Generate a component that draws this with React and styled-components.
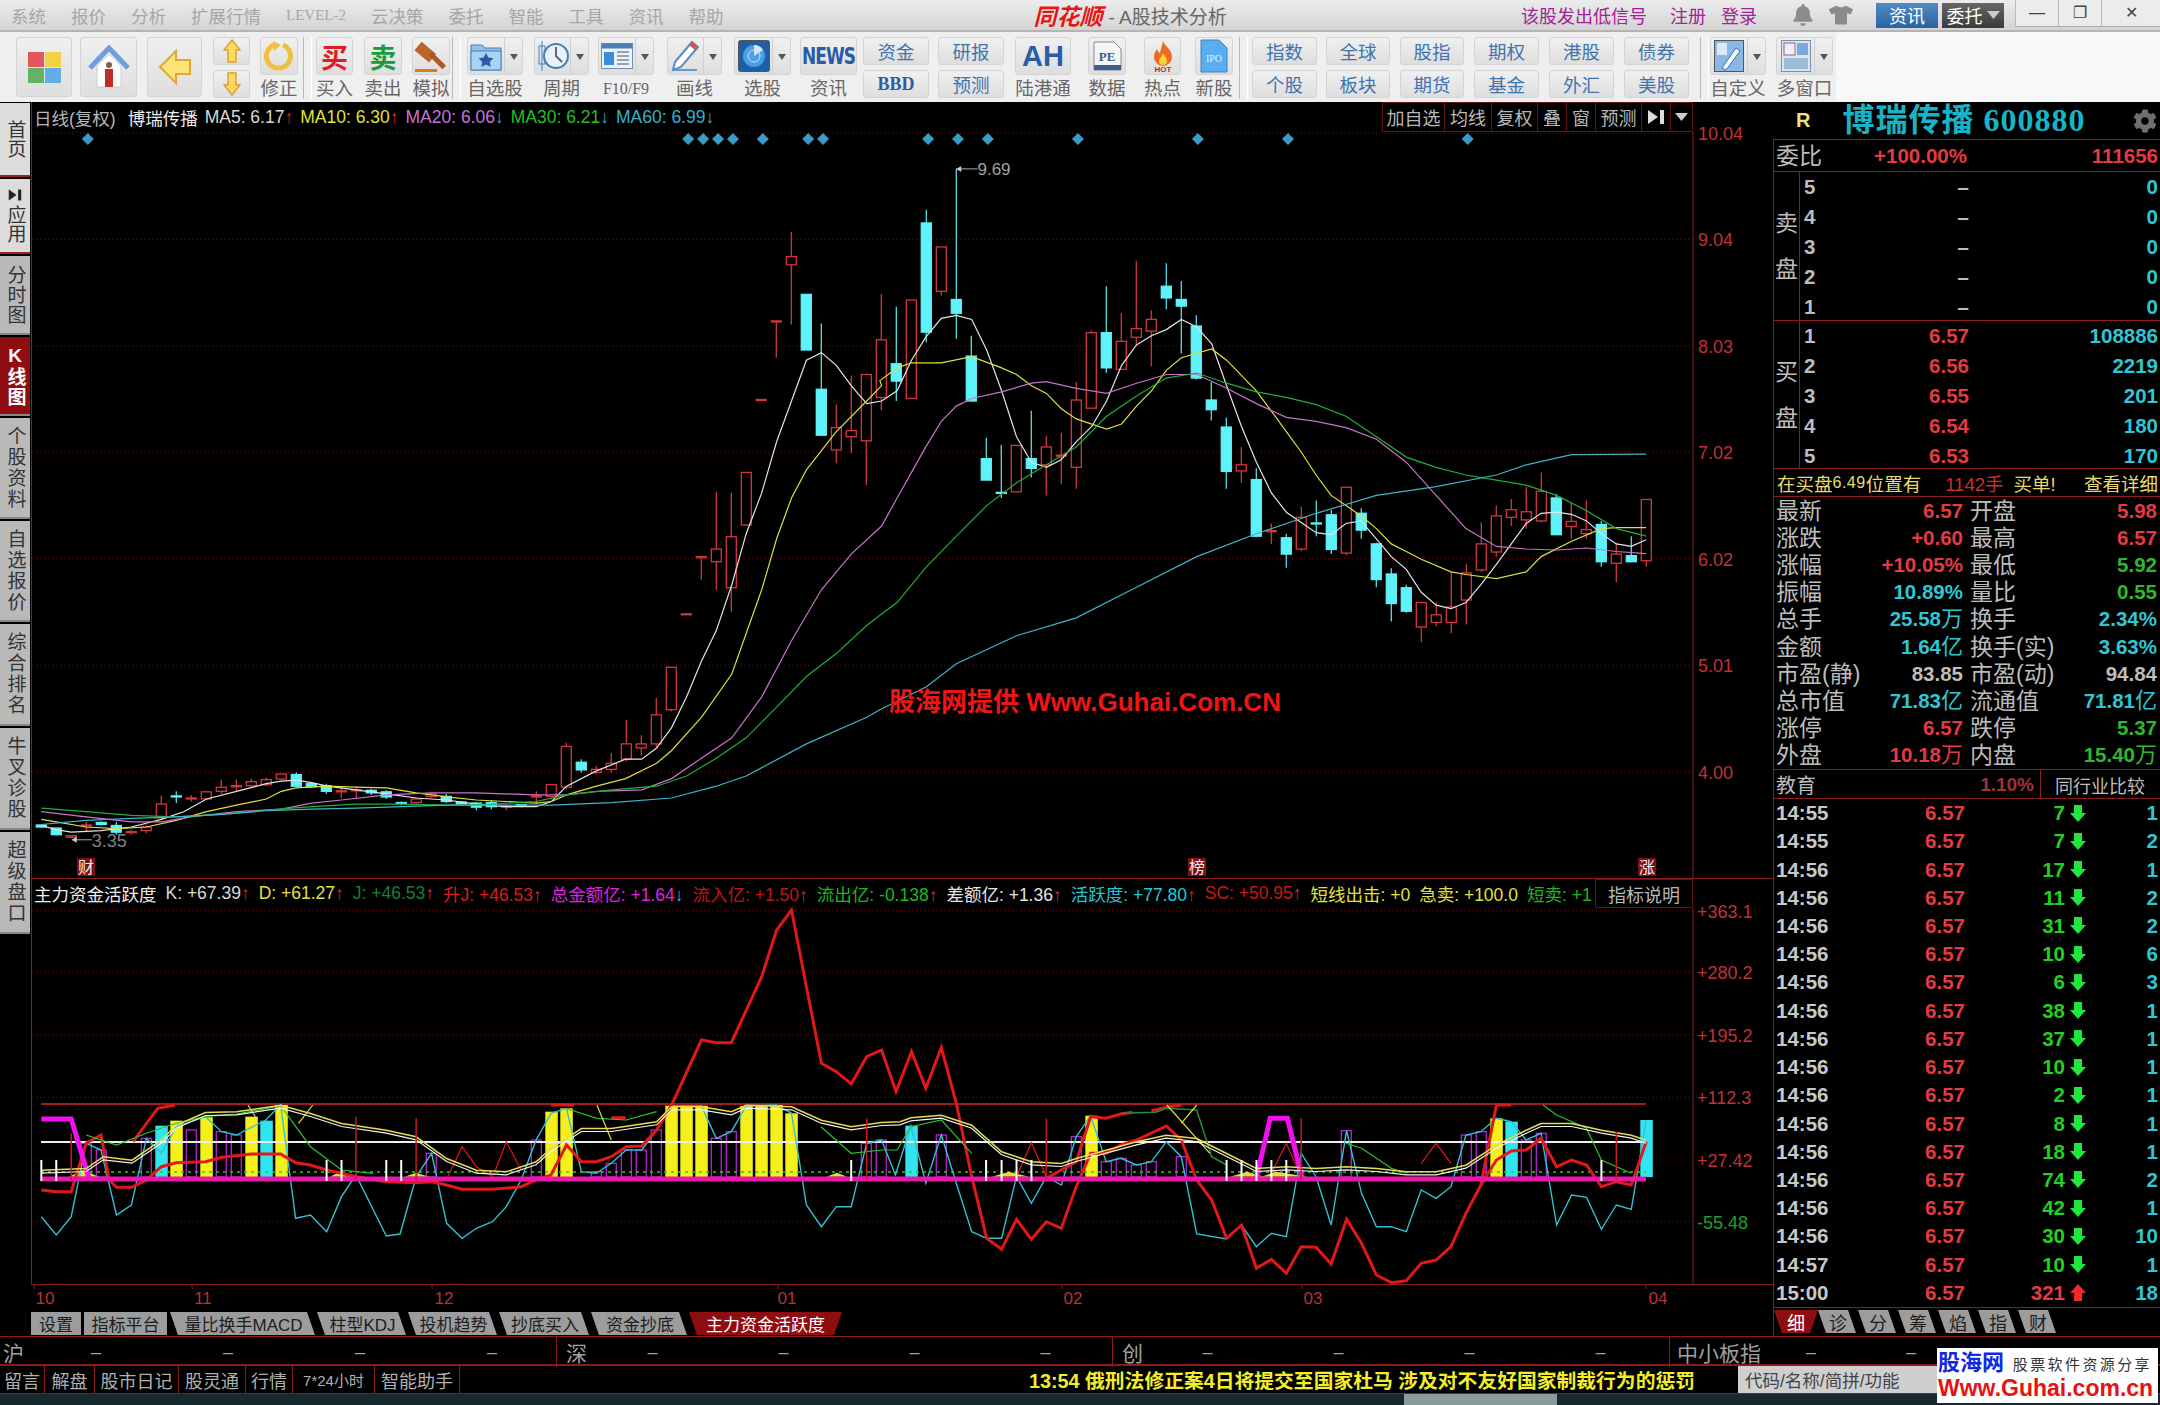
import React from "react";
import styled, { createGlobalStyle } from "styled-components";
import { FaBell, FaCog, FaTshirt } from "react-icons/fa";

const LINE = "#8c1c1c";
const RED = "#e23b44";
const CYAN = "#2fc6d6";
const GREEN = "#2fb82f";
const GREY = "#bdbdbd";
const CJK = `"Liberation Sans", "Noto Sans CJK SC", sans-serif`;

const Global = createGlobalStyle`
  html, body { margin: 0; padding: 0; background: #000; }
  * { box-sizing: border-box; }
`;

const Page = styled.div`
  width: 2160px;
  height: 1405px;
  position: relative;
  overflow: hidden;
  display: flex;
  flex-direction: column;
  background: #000;
  font-family: ${CJK};
`;

/* title bar */
const TitleBar = styled.div`
  height: 32px;
  flex: none;
  display: flex;
  align-items: center;
  padding-left: 11px;
  background: linear-gradient(#ececec, #d4d4d4);
  border-bottom: 2px solid #b4b4b4;
`;
const Menu = styled.div`
  display: flex;
  gap: 25px;
  color: #a6a6a6;
  font-size: 17.5px;
`;
const MenuSerif = styled.span`
  font-family: "Liberation Serif", serif;
  font-size: 15px;
  line-height: 24px;
`;
const Brand = styled.div`
  margin-left: 310px;
  display: flex;
  align-items: center;
  gap: 6px;
  color: #666;
  font-size: 19px;
`;
const BrandMark = styled.span`
  color: #e01818;
  font-weight: 700;
  font-style: italic;
  font-size: 23px;
  text-shadow: 0 0 1px #fff;
`;
const TitleRight = styled.div`
  margin-left: auto;
  display: flex;
  align-items: center;
  height: 100%;
`;
const Alert = styled.span`
  color: #a5219a;
  font-size: 18px;
  margin-left: ${(p) => p.$ml}px;
`;
const Shade = styled.span`
  display: flex;
  color: #8b8b8b;
  margin-left: ${(p) => p.$ml}px;
`;
const SkinButton = styled.span`
  width: 62px;
  height: 25px;
  margin-left: ${(p) => p.$ml}px;
  display: flex;
  align-items: center;
  justify-content: center;
  gap: 4px;
  color: #fff;
  font-size: 18px;
  background: ${(p) => (p.$blue ? "linear-gradient(#4f8cc4, #2a62a0)" : "linear-gradient(#666, #3a3a3a)")};
`;
const WinButton = styled.span`
  width: ${(p) => p.$w}px;
  height: 27px;
  margin-top: -4px;
  margin-left: ${(p) => p.$ml || 0}px;
  display: flex;
  align-items: center;
  justify-content: center;
  color: #444;
  background: #ececec;
  border-left: 1px solid #bbb;
  border-bottom: 1px solid #aaa;
`;

/* toolbar */
const Toolbar = styled.div`
  height: 70px;
  flex: none;
  background: #f8f8f8;
`;
const ToolRow = styled.div`
  width: 1836px;
  height: 100%;
  padding: 5px 0 0 16px;
  display: flex;
  align-items: flex-start;
  background: #efefef;
`;
const Tool = styled.div`
  width: ${(p) => p.$w}px;
  margin-left: ${(p) => p.$ml || 0}px;
  flex: none;
  display: flex;
  flex-direction: column;
  align-items: center;
`;
const ToolBox = styled.div`
  width: 100%;
  height: ${(p) => p.$h || 38}px;
  margin-bottom: ${(p) => p.$mb || 0}px;
  display: flex;
  align-items: center;
  justify-content: center;
  border: 1px solid #d4d4d4;
  border-radius: 3px;
  background: linear-gradient(#f0f0f0, #dedede);
  color: #3f74ae;
  font-size: 18.5px;
  white-space: nowrap;
`;
const SplitIcon = styled.span`
  flex: 1;
  height: 100%;
  display: flex;
  align-items: center;
  justify-content: center;
`;
const Caret = styled.span`
  width: 18px;
  height: 100%;
  display: flex;
  align-items: center;
  justify-content: center;
  border-left: 1px solid #d0d0d0;
  &::after {
    content: "";
    border: 4px solid transparent;
    border-top: 6px solid #555;
    margin-top: 5px;
  }
`;
const ToolLabel = styled.span`
  color: #666;
  font-size: 18.5px;
  line-height: 24px;
  margin-top: 2px;
  white-space: nowrap;
`;
const ToolLabelSerif = styled(ToolLabel)`
  font-family: "Liberation Serif", serif;
  font-size: 16px;
`;
const Grip = styled.div`
  width: 9px;
  height: 62px;
  margin-left: ${(p) => p.$ml}px;
  flex: none;
  border-left: 1px solid #b8b8b8;
  border-right: 1px solid #fff;
`;
const ToolGlyph = styled.span`
  color: ${(p) => p.$c};
  font-weight: 700;
  font-size: 27px;
`;
const NewsGlyph = styled.span`
  color: #2a5ca8;
  font-family: "DejaVu Sans", sans-serif;
  font-weight: 700;
  font-size: 17px;
  letter-spacing: -1px;
  transform: scaleY(1.35);
`;
const AhGlyph = styled.span`
  color: #2a5ca8;
  font-weight: 700;
  font-size: 29px;
`;
const BbdGlyph = styled.span`
  color: #2a5ca8;
  font-weight: 700;
  font-family: "Liberation Serif", serif;
  font-size: 18px;
`;

/* main body */
const Body = styled.div`
  height: 1234px;
  flex: none;
  display: flex;
`;
const Sidebar = styled.div`
  width: 31px;
  flex: none;
  padding-top: 1px;
  display: flex;
  flex-direction: column;
  gap: 2px;
`;
const SideTab = styled.div`
  height: ${(p) => p.$h}px;
  width: 30px;
  display: flex;
  flex-direction: column;
  align-items: center;
  justify-content: center;
  gap: 3px;
  color: ${(p) => (p.$on ? "#fff" : "#333")};
  background: ${(p) => (p.$on ? "#8f0c10" : p.$top ? "#dcdcdc" : "#b9b9b9")};
  border-bottom: 2px solid ${(p) => (p.$top ? "#9c2020" : "#888")};
  font-size: 19px;
`;
const SideText = styled.span`
  writing-mode: vertical-rl;
  text-orientation: upright;
  letter-spacing: ${(p) => p.$ls}px;
  font-weight: ${(p) => (p.$on ? 700 : 400)};
`;
const ChartColumn = styled.div`
  width: 1742px;
  flex: none;
  display: flex;
  flex-direction: column;
`;
const Pane = styled.div`
  position: relative;
  height: ${(p) => p.$h}px;
  flex: none;
  display: flex;
  flex-direction: column;
  border-bottom: 1px solid ${LINE};
  box-shadow: inset 1px 0 0 ${LINE};
`;
const Legend = styled.div`
  height: ${(p) => p.$h}px;
  flex: none;
  display: flex;
  align-items: center;
  padding-left: 3px;
  gap: ${(p) => p.$gap}px;
  overflow: hidden;
  white-space: nowrap;
  font-size: 17.5px;
  margin-right: 80px;
`;
const LegendItem = styled.span`
  color: ${(p) => p.$c};
  flex: none;
  margin-left: ${(p) => p.$ml || 0}px;
`;
const Arrow = styled.span`
  color: ${(p) => (p.$up ? "#e02020" : "#39b4d0")};
`;
const Buttons = styled.div`
  position: absolute;
  right: 80px;
  top: 0;
  height: ${(p) => p.$h}px;
  display: flex;
  background: #000;
`;
const BarButton = styled.span`
  width: ${(p) => p.$w}px;
  display: flex;
  align-items: center;
  justify-content: center;
  color: #b8b8b8;
  font-size: 18px;
  border: 1px solid #641414;
  border-left-width: ${(p) => (p.$first ? 1 : 0)}px;
`;
const Plot = styled.svg`
  display: block;
  flex: none;
  width: 1742px;
  overflow: visible;
`;
const Watermark = styled.div`
  position: absolute;
  left: 858px;
  top: 579px;
  color: #f01414;
  font-size: 26px;
  font-weight: 700;
  white-space: nowrap;
`;
const TabRow = styled.div`
  height: 26px;
  flex: none;
  display: flex;
  align-items: flex-start;
  padding-top: 2px;
`;
const IndicatorTab = styled.span`
  width: ${(p) => p.$w}px;
  height: 23px;
  flex: none;
  display: flex;
  align-items: center;
  justify-content: center;
  margin-right: ${(p) => p.$mr || 0}px;
  font-size: 17px;
  white-space: nowrap;
  color: ${(p) => (p.$on ? "#fff" : "#1c1c1c")};
  background: ${(p) => (p.$on ? "#8f0c10" : "#9c9c9c")};
  clip-path: ${(p) =>
    p.$on
      ? "polygon(0 0, 100% 0, calc(100% - 8px) 100%, 8px 100%)"
      : p.$flat
      ? "none"
      : "polygon(0 0, calc(100% - 10px) 0, calc(100% - 2px) 100%, 8px 100%)"};
`;

/* quote panel */
const Panel = styled.div`
  width: 387px;
  flex: none;
  display: flex;
  flex-direction: column;
`;
const PanelHead = styled.div`
  height: 37px;
  flex: none;
  display: flex;
  align-items: center;
  padding-left: 23px;
`;
const RMark = styled.span`
  color: #eee27a;
  font-size: 20px;
  font-weight: 700;
`;
const StockName = styled.span`
  margin-left: 32px;
  color: #18b4c6;
  font-family: "Liberation Serif", "Noto Sans CJK SC", serif;
  font-size: 32px;
  font-weight: 700;
  line-height: 37px;
  letter-spacing: 1px;
  white-space: nowrap;
`;
const GearWrap = styled.span`
  margin-left: auto;
  margin-right: 3px;
  display: flex;
  color: #6f6f6f;
`;
const PanelBody = styled.div`
  flex: 1;
  min-height: 0;
  display: flex;
  flex-direction: column;
  border-left: 1px solid ${LINE};
`;
const RatioRow = styled.div`
  height: 33px;
  flex: none;
  display: grid;
  grid-template-columns: 191px 1fr;
  align-items: center;
  padding: 0 2px;
  border-top: 1px solid ${LINE};
  border-bottom: 1px solid ${LINE};
`;
const CellSplit = styled.div`
  display: flex;
  justify-content: space-between;
  align-items: center;
`;
const Cjk = styled.span`
  color: ${GREY};
  font-size: 23px;
  line-height: 26px;
  white-space: nowrap;
`;
const Num = styled.span`
  color: ${(p) => p.$c || GREY};
  font-size: 20.5px;
  line-height: 26px;
  font-weight: 700;
  text-align: right;
  white-space: nowrap;
`;
const NumUnit = styled.span`
  font-size: 22px;
  font-weight: 400;
`;
const Book = styled.div`
  height: ${(p) => p.$h}px;
  flex: none;
  display: flex;
  border-bottom: 1px solid ${LINE};
`;
const BookSide = styled.div`
  width: 26px;
  flex: none;
  display: flex;
  flex-direction: column;
  align-items: center;
  justify-content: center;
  gap: 14px;
  line-height: 32px;
  border-right: 1px solid ${LINE};
  color: ${GREY};
  font-size: 23px;
`;
const BookRows = styled.div`
  flex: 1;
  display: grid;
  grid-auto-rows: 30px;
`;
const BookRow = styled.div`
  display: grid;
  grid-template-columns: 165px 1fr;
  align-items: center;
  padding: 0 2px 0 4px;
`;
const NoticeRow = styled.div`
  height: 28px;
  flex: none;
  display: flex;
  align-items: center;
  padding: 0 2px 0 3px;
  border-bottom: 1px solid ${LINE};
  color: #e6dc72;
  font-size: 18.5px;
  white-space: nowrap;
`;
const NoticeNum = styled.span`
  font-size: 16px;
  letter-spacing: 0.5px;
`;
const NoticeRed = styled.span`
  color: #c83030;
  margin-left: ${(p) => p.$ml}px;
`;
const NoticeBuy = styled.span`
  margin-left: 10px;
`;
const NoticeEnd = styled.span`
  margin-left: auto;
`;
const Stats = styled.div`
  height: 272px;
  flex: none;
  display: grid;
  grid-template-rows: repeat(10, 27.2px);
  overflow: hidden;
`;
const StatRow = styled.div`
  display: grid;
  grid-template-columns: 187px 187px;
  column-gap: 7px;
  padding-left: 2px;
  align-items: center;
`;
const SectorRow = styled.div`
  height: 30px;
  flex: none;
  display: grid;
  grid-template-columns: 267px 1fr;
  align-items: center;
  border-top: 1px solid ${LINE};
  border-bottom: 1px solid ${LINE};
`;
const SectorLeft = styled.div`
  height: 100%;
  display: flex;
  align-items: center;
  justify-content: space-between;
  padding: 0 6px 0 2px;
  border-right: 1px solid ${LINE};
  color: ${GREY};
  font-size: 20px;
`;
const SectorPct = styled.span`
  color: #a43036;
  font-size: 19px;
  font-weight: 700;
`;
const SectorLink = styled.span`
  color: ${GREY};
  font-size: 18px;
  padding-left: 14px;
`;
const Trades = styled.div`
  height: 509px;
  flex: none;
  display: grid;
  grid-auto-rows: 1fr;
  border-bottom: 1px solid ${LINE};
`;
const TradeRow = styled.div`
  display: grid;
  grid-template-columns: 189px 100px 25px 1fr;
  align-items: center;
  padding: 0 2px;
`;
const ArrowCell = styled.span`
  display: flex;
  justify-content: center;
`;
const QuoteTab = styled(IndicatorTab)`
  font-size: 18px;
`;

/* index strip and status bar */
const IndexRow = styled.div`
  height: 30px;
  flex: none;
  display: grid;
  grid-template-columns: 556px 556px 557px 1fr;
  border-top: 1px solid ${LINE};
  border-bottom: 2px solid ${LINE};
`;
const IndexCell = styled.div`
  display: flex;
  align-items: center;
  padding-left: ${(p) => p.$pl}px;
  border-left: ${(p) => (p.$line ? `1px solid ${LINE}` : "none")};
`;
const IndexName = styled.span`
  width: ${(p) => p.$w}px;
  flex: none;
  color: #a0a0a0;
  font-size: 21px;
  white-space: nowrap;
`;
const IndexDash = styled.span`
  width: ${(p) => p.$w}px;
  flex: none;
  text-align: center;
  color: #a0a0a0;
  font-size: 18px;
`;
const StatusBar = styled.div`
  height: 28px;
  flex: none;
  display: flex;
  align-items: stretch;
  border-bottom: 1px solid ${LINE};
`;
const StatusItem = styled.span`
  width: ${(p) => p.$w}px;
  flex: none;
  display: flex;
  align-items: center;
  justify-content: center;
  color: #b0b0b0;
  font-size: ${(p) => p.$fs || 18}px;
  border-right: 1px solid ${LINE};
  white-space: nowrap;
`;
const News = styled.div`
  width: 1235px;
  flex: none;
  display: flex;
  align-items: center;
  justify-content: flex-end;
  color: #f2ee2a;
  font-size: 19.8px;
  font-weight: 700;
  white-space: nowrap;
`;
const SearchBox = styled.div`
  width: 199px;
  margin-left: 43px;
  flex: none;
  display: flex;
  align-items: center;
  padding-left: 7px;
  color: #444;
  background: #cfcfcf;
  font-size: 17.5px;
  white-space: nowrap;
`;
const DesktopStrip = styled.div`
  flex: 1;
  padding-left: 1404px;
  display: flex;
  background: #15292f;
`;
const DesktopChunk = styled.span`
  width: 153px;
  background: #8a9a9d;
`;
const SiteBadge = styled.div`
  position: absolute;
  right: 2px;
  bottom: 2px;
  width: 221px;
  height: 55px;
  display: flex;
  flex-direction: column;
  justify-content: center;
  padding-left: 1px;
  background: #fff;
`;
const SiteTop = styled.div`
  display: flex;
  align-items: center;
  justify-content: space-between;
  padding-right: 6px;
`;
const SiteName = styled.span`
  color: #1228e0;
  font-size: 22px;
  font-weight: 700;
  line-height: 26px;
`;
const SiteSlogan = styled.span`
  color: #333;
  font-size: 15px;
  letter-spacing: 2.4px;
  white-space: nowrap;
`;
const SiteUrl = styled.span`
  color: #e81010;
  font-size: 23px;
  font-weight: 700;
  line-height: 25px;
  white-space: nowrap;
`;

/* chart data: x and y are read off the picture */
const GX = (g) => (g * 900) / 1568;
const MY = (y) => 100 + (y * 800) / 1568;
const SY = (y) => 860 + y / 3;
const CX = (i) => 41.3 + i * 15;
const line = (fy, left, right = "") => {
  const pts = [];
  left.trim().split(/\s+/).filter(Boolean).forEach((p) => {
    const [x, y] = p.split(",").map(Number);
    pts.push(`${GX(x).toFixed(1)},${fy(y).toFixed(1)}`);
  });
  right.trim().split(/\s+/).filter(Boolean).forEach((p) => {
    const [x, y] = p.split(",").map(Number);
    pts.push(`${GX(x + 1533).toFixed(1)},${fy(y).toFixed(1)}`);
  });
  return pts.join(" ");
};

// [kind, high, bodyTop, bodyBottom, low], kind: r up, c down
const CANDLES = [
  ["c",1420,1421,1425,1427],["c",1427,1427,1440,1441],["r",1441,1442,1445,1447],["r",1415,1421,1423,1435],["c",1414,1416,1420,1422],
  ["c",1415,1422,1435,1440],["r",1430,1434,1436,1440],["r",1420,1425,1432,1437],["r",1363,1380,1407,1410],["c",1355,1364,1366,1378],
  ["r",1362,1368,1370,1375],["r",1355,1356,1370,1372],["r",1332,1347,1355,1360],["r",1332,1344,1346,1355],["r",1330,1336,1344,1348],
  ["r",1328,1332,1342,1345],["r",1320,1321,1331,1333],["c",1318,1322,1345,1348],["c",1338,1340,1346,1348],["c",1340,1344,1355,1360],
  ["r",1345,1354,1356,1368],["r",1345,1352,1354,1368],["c",1350,1353,1358,1362],["c",1353,1356,1366,1370],["c",1375,1377,1379,1383],
  ["r",1368,1370,1377,1379],["r",1358,1360,1365,1368],["c",1360,1365,1375,1378],["c",1374,1376,1380,1383],["c",1376,1378,1386,1392],
  ["c",1372,1377,1385,1390],["r",1380,1384,1386,1392],["c",1380,1381,1383,1386],["r",1355,1364,1366,1380],["r",1342,1342,1365,1367],
  ["r",1260,1267,1347,1350],["c",1292,1298,1313,1318],["r",1305,1312,1318,1322],["r",1280,1300,1312,1318],["r",1215,1262,1292,1296],
  ["r",1245,1262,1270,1285],["r",1172,1205,1262,1268],["r",1112,1112,1195,1198],["r",1007,1007,1009,1009],["r",895,895,896,940],
  ["r",768,880,905,960],["r",770,856,956,1003],["r",730,730,833,835],["r",587,587,589,589],["r",433,433,434,505],
  ["r",258,307,323,440],["c",381,381,490,490],["c",438,567,657,657],["r",597,642,686,712],["r",540,648,660,692],
  ["r",538,538,668,755],["r",380,470,583,608],["c",405,517,551,590],["r",392,392,585,585],["c",215,241,455,475],
  ["r",288,288,375,383],["c",135,391,418,468],["c",462,502,590,590],["c",662,703,745,745],["c",676,769,771,780],
  ["r",677,677,768,768],["c",609,703,722,740],["r",658,680,715,775],["r",652,696,698,752],["r",552,588,720,762],
  ["r",452,456,604,604],["c",365,456,525,535],["r",418,473,528,528],["r",315,448,465,480],["r",412,430,453,522],
  ["c",320,365,388,410],["c",355,391,404,497],["c",422,443,545,548],["c",553,588,607,628],["c",623,641,728,762],
  ["r",680,715,727,750],["c",722,744,855,857],["r",830,844,846,870],["c",850,858,890,917],["r",797,818,880,884],
  ["c",785,829,831,855],["c",803,813,881,890],["r",759,759,888,892],["c",800,810,843,860],["c",868,870,940,955],
  ["c",918,929,987,1022],["c",950,956,1002,1005],["r",985,985,1033,1063],["r",985,1009,1024,1032],["r",925,994,1024,1045],
  ["r",910,927,980,1028],["r",828,870,921,925],["r",795,815,886,895],["r",782,803,818,835],["r",758,807,823,840],
  ["r",730,767,825,828],["c",772,780,852,852],["r",790,826,836,860],["r",785,842,850,860],["c",825,832,905,915],
  ["r",868,890,908,945],["c",855,893,905,905],["r",783,783,903,915],
];

const MA = [
  ["#e4e4e4", line(MY,
    "72,1422 98,1430 124,1435 176,1432 229,1425 281,1410 320,1395 360,1370 412,1355 464,1340 490,1335 516,1333 543,1338 570,1345 620,1352 673,1360 725,1368 778,1372 830,1380 880,1385 934,1385 961,1375 987,1345 1039,1315 1090,1292 1118,1292 1144,1270 1170,1230 1196,1170 1222,1100 1248,1040 1275,950 1300,850 1327,770 1353,670 1379,590 1405,510 1431,495 1457,520 1483,560 1510,595",
    "3,590 30,570 55,510 80,465 107,428 133,422 160,430 186,490 212,570 238,660 264,710 290,720 316,705 342,670 369,640 395,590 421,520 447,480 473,462 499,450 525,430 552,445 578,478 604,560 630,640 656,710 682,770 708,808 734,828 760,848 786,852 812,830 838,825 865,860 891,895 917,920 943,965 969,990 995,997 1021,985 1047,950 1074,910 1100,870 1126,830 1152,810 1179,808 1205,812 1231,825 1257,850 1283,870 1309,875 1335,862")],
  ["#dede40", line(MY,
    "72,1410 98,1415 150,1425 203,1428 255,1425 307,1412 360,1395 412,1382 464,1370 490,1355 516,1348 570,1345 620,1347 673,1348 725,1358 778,1366 830,1372 880,1375 934,1378 961,1375 987,1362 1039,1345 1090,1330 1144,1300 1170,1275 1222,1210 1275,1125 1327,960 1353,860 1379,780 1405,725 1457,650 1510,590 1536,560",
    "0,550 30,525 55,515 107,515 160,503 212,525 238,538 264,560 290,575 316,605 342,625 395,645 421,635 447,600 473,570 499,530 525,505 578,488 604,510 656,570 682,610 708,650 734,690 760,735 786,775 812,795 838,815 865,840 891,870 917,885 943,900 995,925 1021,930 1074,938 1126,925 1152,895 1205,865 1257,840 1283,838 1335,838")],
  ["#c874c8", line(MY,
    "72,1395 150,1405 229,1415 281,1415 333,1405 412,1395 490,1390 543,1378 595,1372 673,1362 752,1358 830,1358 934,1362 987,1362 1040,1355 1118,1352 1170,1330 1222,1290 1275,1250 1327,1170 1379,1060 1431,960 1483,890",
    "3,835 30,780 55,730 80,680 107,630 133,600 160,585 212,572 264,555 290,552 342,565 395,575 447,555 499,538 552,538 604,565 656,595 708,622 760,630 812,642 865,665 917,710 969,775 1021,840 1074,875 1126,880 1179,882 1231,878 1283,885 1335,889")],
  ["#1fae3a", line(MY,
    "72,1388 150,1395 229,1402 307,1405 386,1400 464,1392 543,1385 621,1380 700,1380 778,1382 856,1380 934,1375 987,1362 1065,1352 1144,1345 1196,1325 1248,1290 1300,1250 1353,1190 1405,1130 1457,1085 1510,1030",
    "0,1010 30,985 81,915 133,855 186,795 238,750 290,715 342,680 395,620 447,580 499,545 552,535 604,555 656,572 708,583 760,597 812,620 865,660 917,700 969,720 1021,735 1074,745 1126,755 1179,775 1231,805 1283,840 1335,855")],
  ["#3fb4c8", line(MY,
    "72,1420 150,1412 229,1408 307,1405 386,1400 464,1393 543,1390 621,1388 700,1385 778,1382 856,1382 961,1382 1065,1377 1170,1368 1248,1345 1300,1325 1405,1262 1510,1210",
    "0,1195 81,1150 133,1105 238,1050 342,1015 447,955 552,895 656,850 760,810 865,775 969,758 1074,735 1126,715 1205,695 1335,694")],
];

const DIAMONDS = [153, 1199, 1225, 1251, 1277, 1329, 1408, 1434, 1617, 1669, 1721, 1878, 2087, 2244, 2557];
const PRICE_GRID = [["10.04", 65], ["9.04", 273], ["8.03", 482], ["7.02", 690], ["6.02", 899], ["5.01", 1108], ["4.00", 1318]];
const TAGS = [["财", 86], ["榜", 1197], ["涨", 1647]];

const SUB_GRID = [["+363.1", 152], ["+280.2", 337], ["+195.2", 525], ["+112.3", 712], ["+27.42", 900], ["-55.48", 1085]];
const SOLID_BARS = [
  [8, "c", 797], [9, "y", 782], [11, "y", 772], [14, "y", 770], [15, "c", 782], [16, "y", 735], [34, "y", 755], [35, "y", 745],
  [42, "y", 737], [43, "y", 737], [44, "y", 737], [47, "y", 738], [48, "y", 738], [49, "y", 735], [50, "y", 760], [58, "c", 797],
  [70, "y", 767], [97, "y", 775], [98, "c", 785], [107, "c", 780],
];
const HOLLOW_BARS = [
  [3, 850], [4, 870], [7, 835], [10, 810], [12, 815], [13, 825], [26, 880], [33, 840], [37, 935], [38, 910], [39, 870], [40, 870], [41, 810],
  [45, 835], [46, 815], [55, 850], [56, 840], [60, 825], [69, 830], [71, 905], [72, 895], [73, 915], [74, 905], [76, 890], [87, 812], [95, 825], [96, 815], [99, 840], [100, 820],
];
const WHITE_TICKS = [72, 98, 569, 595, 673, 699, 1483, 1718, 1745, 1771, 1797, 2137, 2163, 2189, 2215, 2241, 2790];
const RED_TICKS = [[124, 820], [620, 770], [725, 775], [1510, 775], [1823, 775], [2267, 775], [2816, 815]];

const KD = line(SY,
  "72,935 150,930 180,895 230,905 281,845 307,800 358,762 412,760 489,740 541,765 595,795 673,815 725,835 778,900 830,935 882,940 934,910 960,870 1013,810 1065,810 1144,790 1170,745 1222,745 1274,760 1300,740 1379,745 1431,785 1483,805 1536,792",
  "35,790 54,778 107,770 160,800 212,880 264,910 316,915 342,900 394,875 447,850 499,830 552,840 604,885 656,930 708,925 760,930 813,925 865,930 917,940 969,940 1021,920 1074,860 1126,815 1152,795 1205,795 1257,815 1309,830 1335,845");
const shiftY = (pts, dy) => pts.split(" ").map((p) => { const [x, y] = p.split(","); return `${x},${Number(y) + dy}`; }).join(" ");

const SUB_LINES = [
  ["#32c0d2", 1.4, line(SY,
    "72,1070 98,1125 124,1070 150,850 176,870 203,1065 229,1035 255,835 281,880 307,800 358,770 386,815 412,825 463,780 489,735 515,1075 541,1065 569,1115 595,1010 620,945 673,1128 697,1122 725,950 752,880 778,1090 805,1135 830,1105 858,1085 882,1040 908,960 934,840 960,760 987,745 1013,935 1039,940 1065,910 1091,870 1118,870 1144,810 1170,738 1222,738 1248,835 1274,815 1300,738 1353,735 1379,760 1405,1035 1431,1100 1457,1040 1483,1040 1510,850",
    "3,840 27,945 54,797 80,970 107,825 133,970 160,1115 186,1135 212,1135 238,950 264,1030 290,950 316,975 342,830 367,767 394,905 420,895 447,915 473,905 499,845 525,890 552,1122 604,1137 630,1095 656,1160 682,1120 708,1130 734,880 760,950 786,1095 813,812 839,1000 865,1100 891,1100 917,1115 943,990 969,1015 995,980 1021,825 1047,815 1074,775 1100,785 1126,840 1152,820 1179,1095 1205,1005 1231,1012 1257,1108 1283,1035 1309,1048 1335,780")],
  ["#e01818", 3, line(SY,
    "72,990 98,995 124,995 150,850 176,825 190,960 203,982 229,982 255,960 281,920 307,908 358,905 386,892 438,882 489,882 515,908 541,915 569,930 595,940 620,950 673,965 725,968 752,965 778,975 805,988 858,988 908,980 934,960 960,945 987,855 1013,905 1039,905 1065,890 1091,860 1118,858 1144,810 1170,735 1222,540 1248,548 1274,548 1327,350 1353,210 1379,150 1405,380 1431,610 1457,635 1483,672 1510,590 1536,570",
    "28,695 55,575 80,685 107,562 133,730 160,950 186,1135 212,1168 238,1078 264,1138 290,1085 316,1105 342,980 367,880 394,880 420,855 447,840 499,798 525,840 552,960 578,1020 604,1135 630,1095 656,1225 682,1198 708,1240 734,1160 760,1162 786,1212 813,1078 839,1150 865,1245 891,1268 917,1262 943,1210 969,1200 995,1160 1021,1060 1047,975 1074,735 1100,735")],
  ["#e01818", 3, line(SY, "", "1047,975 1074,900 1100,873 1126,870 1152,835 1179,920 1205,900 1231,915 1257,980 1283,965 1309,975 1335,845")],
  ["#e01818", 3, line(SY, "232,845 255,790 275,745 305,735")],
  ["#e01818", 3, line(SY, "960,735 1000,735")],
  ["#e01818", 3, line(SY, "1065,773 1090,773")],
  ["#e01818", 3, line(SY, "", "290,955 342,905 367,770 394,775 420,762 440,757")],
  ["#e01818", 3, line(SY, "", "473,752 499,742 525,735")],
  ["#1f8f3a", 1.5, line(SY, "", "420,760 480,757 499,745 552,750 578,890 604,915")],
  ["#2cc22c", 1.2, line(SY, "150,825 203,855 255,820 307,790 358,770 412,762 489,738 541,860 595,930 650,940")],
  ["#2cc22c", 1.2, line(SY, "985,745 1040,775 1091,780 1144,755")],
  ["#2cc22c", 1.2, line(SY, "1430,800 1483,880 1536,870", "30,870 54,800 107,780 160,880")],
  ["#2cc22c", 1.2, line(SY, "", "812,850 839,865 891,925 917,940")],
  ["#2cc22c", 1.2, line(SY, "", "1155,735 1179,765 1231,805 1257,900 1309,940")],
  ["#e6dc30", 1.2, line(SY, "432,735 445,770")],
  ["#e6dc30", 1.2, line(SY, "545,735 520,790")],
  ["#e6dc30", 1.2, line(SY, "1040,735 1065,840")],
  ["#e6dc30", 1.2, line(SY, "", "500,735 575,880")],
  ["#e6dc30", 1.2, line(SY, "", "552,735 525,790")],
  ["#e01818", 1.2, line(SY, "780,950 805,860 830,920 860,950")],
  ["#e01818", 1.2, line(SY, "860,945 882,845 908,930")],
  ["#e01818", 1.2, line(SY, "", "238,950 264,848 290,950")],
  ["#e01818", 1.2, line(SY, "", "682,940 708,850 734,950")],
  ["#e01818", 1.2, line(SY, "", "943,910 969,850 995,910")],
  ["#f010f0", 5, line(SY, "72,777 124,777 155,955")],
  ["#f010f0", 5, line(SY, "", "656,955 680,775 710,775 735,950")],
];
const HUMPS = ["120,950 145,930 172,950", "575,950 592,935 612,950", "705,950 725,938 747,950", "1440,950 1458,938 1476,950"];
const HUMPS_R = ["195,950 225,935 260,950", "610,950 640,935 670,950", "665,950 690,935 745,950"];
const DATES = [["10", 45], ["11", 203], ["12", 444], ["01", 787], ["02", 1073], ["03", 1313], ["04", 1658]];
const DATE_TICKS = [34, 192, 432, 778, 1062, 1302, 1646];

const Gridline = ({ y }) => (
  <line x1="32" x2="1693" y1={y} y2={y} stroke="#6a1212" strokeWidth="1" strokeDasharray="1 3" />
);

function MainPlot() {
  const hiX = GX(1666);
  const loX = GX(125);
  return (
    <Plot height="746" viewBox="31 132 1742 746">
      {PRICE_GRID.map(([label, y]) => (
        <g key={label}>
          <Gridline y={MY(y)} />
          <text x="1698" y={MY(y) + 7} fill="#c23038" fontSize="18" fontFamily="Liberation Sans">{label}</text>
        </g>
      ))}
      <line x1="1693" x2="1693" y1="132" y2="878" stroke={LINE} />
      {DIAMONDS.map((g) => (
        <polygon key={g} points={`${GX(g) - 6},139 ${GX(g)},133 ${GX(g) + 6},139 ${GX(g)},145`} fill="#3a9cc4" />
      ))}
      {CANDLES.map(([kind, hi, top, bot, lo], i) => {
        const x = CX(i);
        const stroke = kind === "r" ? "#d5353c" : "#52dfe8";
        return (
          <g key={i}>
            <line x1={x} x2={x} y1={MY(hi)} y2={MY(lo)} stroke={stroke} strokeWidth="1.3" />
            <rect x={x - 5} y={MY(top)} width="10" height={Math.max(MY(bot) - MY(top), 1)}
              fill={kind === "r" ? "#000" : "#5ef2fa"} stroke={kind === "r" ? stroke : "#5ef2fa"} strokeWidth="1.3" />
          </g>
        );
      })}
      {MA.map(([color, pts]) => (
        <polyline key={color} points={pts} fill="none" stroke={color} strokeWidth="1.2" />
      ))}
      <line x1={hiX} x2={GX(1703)} y1={MY(135)} y2={MY(135)} stroke="#aaa" />
      <polygon points={`${hiX},${MY(135)} ${hiX + 5},${MY(135) - 3} ${hiX + 5},${MY(135) + 3}`} fill="#ccc" />
      <text x={GX(1703)} y={MY(135) + 6} fill="#a0a0a0" fontSize="17" fontFamily="Liberation Sans">9.69</text>
      <line x1={loX} x2={GX(160)} y1={MY(1450)} y2={MY(1450)} stroke="#aaa" />
      <polygon points={`${loX},${MY(1450)} ${loX + 5},${MY(1450) - 3} ${loX + 5},${MY(1450) + 3}`} fill="#ccc" />
      <text x={GX(160)} y={MY(1450) + 7} fill="#808080" fontSize="18" fontFamily="Liberation Sans">3.35</text>
      {TAGS.map(([t, x]) => (
        <g key={t}>
          <rect x={x - 9} y="858" width="18" height="18" fill="#7c1014" />
          <text x={x} y="873" fill="#eee" fontSize="16" textAnchor="middle" fontFamily="Noto Sans CJK SC">{t}</text>
        </g>
      ))}
    </Plot>
  );
}

function SubPlot() {
  return (
    <Plot height="376" viewBox="31 908 1742 376">
      {SUB_GRID.map(([label, y]) => (
        <g key={label}>
          <Gridline y={SY(y)} />
          <text x="1697" y={SY(y) + 7} fill={label[0] === "-" ? "#1fa02a" : "#c23038"} fontSize="18" fontFamily="Liberation Sans">{label}</text>
        </g>
      ))}
      <line x1="1693" x2="1693" y1="908" y2="1284" stroke={LINE} />
      {HOLLOW_BARS.map(([i, top]) => (
        <rect key={i} x={CX(i) - 5} y={SY(top)} width="10" height={1177 - SY(top)} fill="none" stroke="#b424d8" strokeWidth="1.3" />
      ))}
      {SOLID_BARS.map(([i, c, top]) => (
        <rect key={i} x={CX(i) - 6} y={SY(top)} width="12.5" height={1177 - SY(top)} fill={c === "y" ? "#f6f01a" : "#30e4f0"} />
      ))}
      <line x1="41" x2="1646" y1="1104" y2="1104" stroke="#a31a1e" strokeWidth="2" />
      <line x1="41" x2="1646" y1="1142" y2="1142" stroke="#f0f0f0" strokeWidth="2" />
      <line x1="41" x2="1646" y1="1172" y2="1172" stroke="#22d022" strokeWidth="1.6" strokeDasharray="3 4" />
      {HUMPS.map((h) => <polyline key={h} points={line(SY, h)} fill="#e8dc30" stroke="none" />)}
      {HUMPS_R.map((h) => <polyline key={h} points={line(SY, "", h)} fill="#e8dc30" stroke="none" />)}
      {SUB_LINES.map(([color, w, pts], i) => (
        <polyline key={i} points={pts} fill="none" stroke={color} strokeWidth={w} />
      ))}
      <polyline points={shiftY(KD, -1.5)} fill="none" stroke="#e6dc50" strokeWidth="1.5" />
      <polyline points={shiftY(KD, 1.5)} fill="none" stroke="#f2f2f2" strokeWidth="1.2" />
      <line x1="41" x2="1646" y1="1179" y2="1179" stroke="#e818a8" strokeWidth="5" />
      {WHITE_TICKS.map((g) => (
        <line key={g} x1={GX(g)} x2={GX(g)} y1="1160" y2="1181" stroke="#fff" strokeWidth="2" />
      ))}
      {RED_TICKS.map(([g, top]) => (
        <line key={g} x1={GX(g)} x2={GX(g)} y1={SY(top)} y2="1180" stroke="#c81c1c" strokeWidth="1.5" />
      ))}
    </Plot>
  );
}

function DateAxis() {
  return (
    <Plot height="25" viewBox="31 1285 1742 25">
      {DATE_TICKS.map((x) => (
        <line key={x} x1={x} x2={x} y1="1285" y2="1289" stroke={LINE} />
      ))}
      {DATES.map(([d, x]) => (
        <text key={d} x={x} y="1304" textAnchor="middle" fill="#b83038" fontSize="17" fontFamily="Liberation Sans">{d}</text>
      ))}
    </Plot>
  );
}

/* toolbar drawings */
const TileIcon = () => (
  <svg width="33" height="31" viewBox="0 0 33 31">
    <rect width="16" height="15" fill="#e4565a" /><rect x="17" width="16" height="15" fill="#f2d145" />
    <rect y="16" width="16" height="15" fill="#62b366" /><rect x="17" y="16" width="16" height="15" fill="#63ade6" />
  </svg>
);
const HomeIcon = () => (
  <svg width="42" height="44" viewBox="0 0 42 44">
    <path d="M9 21v21h24V21L21 9z" fill="#fff" stroke="#ccc" />
    <path d="M2 23L21 3l19 20" fill="none" stroke="#6f9fd8" strokeWidth="5" />
    <rect x="17" y="24" width="8" height="18" fill="#c02a2a" />
    <circle cx="21" cy="20" r="3" fill="#8a5a4a" />
  </svg>
);
const BackIcon = () => (
  <svg width="34" height="36" viewBox="0 0 34 36">
    <path d="M2 18L18 2v9h14v14H18v9z" fill="#ffe27a" stroke="#dca83a" strokeWidth="2" />
  </svg>
);
const UpDownIcon = ({ down }) => (
  <svg width="18" height="24" viewBox="0 0 18 24">
    <path d={down ? "M9 23l8-10h-4V1H5v12H1z" : "M9 1l8 10h-4v12H5V11H1z"} fill="#ffd860" stroke="#d8a030" strokeWidth="1.4" />
  </svg>
);
const RefreshIcon = () => (
  <svg width="30" height="30" viewBox="0 0 30 30">
    <path d="M19 4a12 12 0 1 1-9 0" fill="none" stroke="#f0c040" strokeWidth="5" />
    <path d="M9 0l8 4-7 6z" fill="#f0c040" />
  </svg>
);
const GavelIcon = () => (
  <svg width="34" height="36" viewBox="0 0 34 36">
    <rect x="2" y="9" width="19" height="11" transform="rotate(40 12 14)" fill="#b8662a" />
    <rect x="14" y="17" width="20" height="5" transform="rotate(45 20 20)" fill="#a85a22" />
    <rect x="1" y="31" width="22" height="3" fill="#d87a20" />
  </svg>
);
const FolderIcon = () => (
  <svg width="32" height="30" viewBox="0 0 32 30">
    <path d="M1 4h11l3 3h16v22H1z" fill="#8ec0ec" stroke="#4a7fb0" />
    <rect x="1" y="10" width="30" height="19" fill="#a8d2f4" stroke="#4a7fb0" />
    <path d="M16 12l2.4 4.6 5 .7-3.6 3.6.9 5-4.7-2.4-4.7 2.4.9-5-3.6-3.6 5-.7z" fill="#2a5ca0" />
  </svg>
);
const CycleIcon = () => (
  <svg width="32" height="32" viewBox="0 0 32 32">
    <rect x="2" y="6" width="6" height="18" fill="#d8e8f8" stroke="#4a7fb0" />
    <line x1="5" y1="1" x2="5" y2="31" stroke="#4a7fb0" />
    <circle cx="19" cy="16" r="12" fill="#e8f2fc" stroke="#4a7fb0" strokeWidth="2" />
    <path d="M19 7v9l6 6" fill="none" stroke="#666" strokeWidth="2" />
  </svg>
);
const DocIcon = () => (
  <svg width="32" height="26" viewBox="0 0 32 26">
    <rect x=".5" y=".5" width="31" height="25" fill="#eaf2fb" stroke="#6a8fb8" />
    <rect x=".5" y=".5" width="31" height="5" fill="#4a7fb8" />
    <rect x="3" y="9" width="10" height="13" fill="#3a8cd8" />
    <path d="M16 9h12M16 13h12M16 17h12M16 21h12" stroke="#888" strokeWidth="1.5" />
  </svg>
);
const PenIcon = () => (
  <svg width="30" height="32" viewBox="0 0 30 32">
    <path d="M4 22L21 2l6 5L10 27l-8 3z" fill="#fff" stroke="#5a8ac0" strokeWidth="2" />
    <path d="M21 2l6 5-3 3-6-5z" fill="#d85050" />
    <path d="M2 30h24" stroke="#5a9ad8" strokeWidth="2" />
  </svg>
);
const RadarIcon = () => (
  <svg width="32" height="32" viewBox="0 0 32 32">
    <rect x=".5" y=".5" width="31" height="31" rx="2" fill="#1f5fa8" stroke="#555" />
    <circle cx="16" cy="16" r="11" fill="#4aa0e0" />
    <circle cx="16" cy="16" r="6" fill="none" stroke="#cfe8fa" />
    <path d="M16 16V5a11 11 0 0 1 9 5z" fill="#cfe8fa" />
  </svg>
);
const PeIcon = () => (
  <svg width="32" height="32" viewBox="0 0 32 32">
    <path d="M3 2h20l7 7v21H3z" fill="#f4f6f8" stroke="#889" />
    <rect x="3" y="25" width="27" height="5" fill="#3a6090" />
    <text x="16" y="21" textAnchor="middle" fontSize="13" fontWeight="700" fill="#3a6090" fontFamily="Liberation Serif">PE</text>
  </svg>
);
const HotIcon = () => (
  <svg width="28" height="33" viewBox="0 0 28 33">
    <path d="M14 1c2 6 9 8 9 16a9 9 0 0 1-18 0c0-4 2-6 3-8 1 3 2 4 3 4 1-4 2-8 3-12z" fill="#ee6a20" />
    <path d="M14 13c1 3 4 4 4 8a4 4 0 0 1-8 0c0-3 3-4 4-8z" fill="#ffd040" />
    <text x="14" y="32" textAnchor="middle" fontSize="8" fontWeight="700" fill="#d02020" fontFamily="Liberation Sans">HOT</text>
  </svg>
);
const IpoIcon = () => (
  <svg width="28" height="34" viewBox="0 0 28 34">
    <path d="M1 1h18l8 8v24H1z" fill="#58aef0" stroke="#3a80c0" />
    <text x="14" y="23" textAnchor="middle" fontSize="10" fill="#e6f4ff" fontFamily="Liberation Serif">IPO</text>
  </svg>
);
const CustomIcon = () => (
  <svg width="30" height="32" viewBox="0 0 30 32">
    <rect x=".5" y=".5" width="29" height="31" fill="#8ab8e4" stroke="#555" />
    <rect x="3" y="3" width="10" height="12" fill="#dce8f4" />
    <path d="M8 28l14-20 4 3-14 19z" fill="#fff" stroke="#3a70a8" />
  </svg>
);
const WindowsIcon = () => (
  <svg width="30" height="32" viewBox="0 0 30 32">
    <rect x=".5" y=".5" width="29" height="31" fill="#d8e6f4" stroke="#7a90a8" />
    <rect x="3" y="3" width="11" height="12" fill="#eef" stroke="#a06060" />
    <rect x="16" y="3" width="11" height="12" fill="#7aa8d8" />
    <rect x="3" y="18" width="24" height="11" fill="#9cbcd8" />
  </svg>
);
const PlayEnd = ({ size = 18, color = "#ddd" }) => (
  <svg width={size} height={size} viewBox="0 0 18 18">
    <path d="M1 2v14l10-7z" fill={color} />
    <rect x="13" y="2" width="4" height="14" fill={color} />
  </svg>
);
const DropTri = () => (
  <svg width="13" height="8" viewBox="0 0 13 8"><path d="M0 0h13L6.5 8z" fill="#ccc" /></svg>
);
const BlockArrow = ({ up }) => (
  <svg width="16" height="17" viewBox="0 0 16 17">
    <path d={up ? "M4 17h8V9h4L8 0 0 9h4z" : "M4 0h8v8h4l-8 9-8-9h4z"} fill={up ? "#ee2a2a" : "#1ee83c"} />
  </svg>
);

const Split = ({ icon, label, w, ml }) => (
  <Tool $w={w} $ml={ml}>
    <ToolBox><SplitIcon>{icon}</SplitIcon><Caret /></ToolBox>
    <ToolLabel>{label}</ToolLabel>
  </Tool>
);
const Labeled = ({ children, label, w, ml }) => (
  <Tool $w={w} $ml={ml}>
    <ToolBox>{children}</ToolBox>
    <ToolLabel>{label}</ToolLabel>
  </Tool>
);
const Pair = ({ a, b, w, ml }) => (
  <Tool $w={w} $ml={ml}>
    <ToolBox $h={28} $mb={5}>{a}</ToolBox>
    <ToolBox $h={28}>{b}</ToolBox>
  </Tool>
);

function Tools() {
  return (
    <Toolbar>
      <ToolRow>
        <Tool $w={56}><ToolBox $h={60}><TileIcon /></ToolBox></Tool>
        <Tool $w={57} $ml={8}><ToolBox $h={60}><HomeIcon /></ToolBox></Tool>
        <Tool $w={55} $ml={10}><ToolBox $h={60}><BackIcon /></ToolBox></Tool>
        <Pair w={37} ml={11} a={<UpDownIcon />} b={<UpDownIcon down />} />
        <Labeled w={38} ml={10} label="修正"><RefreshIcon /></Labeled>
        <Grip $ml={5} />
        <Labeled w={37} ml={4} label="买入"><ToolGlyph $c="#e01c24">买</ToolGlyph></Labeled>
        <Labeled w={38} ml={11} label="卖出"><ToolGlyph $c="#1a9a3a">卖</ToolGlyph></Labeled>
        <Labeled w={38} ml={10} label="模拟"><GavelIcon /></Labeled>
        <Grip $ml={2} />
        <Split w={56} ml={6} label="自选股" icon={<FolderIcon />} />
        <Split w={55} ml={11} label="周期" icon={<CycleIcon />} />
        <Tool $w={56} $ml={9}>
          <ToolBox><SplitIcon><DocIcon /></SplitIcon><Caret /></ToolBox>
          <ToolLabelSerif>F10/F9</ToolLabelSerif>
        </Tool>
        <Split w={55} ml={13} label="画线" icon={<PenIcon />} />
        <Split w={57} ml={12} label="选股" icon={<RadarIcon />} />
        <Labeled w={57} ml={9} label="资讯"><NewsGlyph>NEWS</NewsGlyph></Labeled>
        <Pair w={66} ml={6} a="资金" b={<BbdGlyph>BBD</BbdGlyph>} />
        <Pair w={66} ml={9} a="研报" b="预测" />
        <Labeled w={56} ml={11} label="陆港通"><AhGlyph>AH</AhGlyph></Labeled>
        <Labeled w={38} ml={17} label="数据"><PeIcon /></Labeled>
        <Labeled w={37} ml={18} label="热点"><HotIcon /></Labeled>
        <Labeled w={38} ml={14} label="新股"><IpoIcon /></Labeled>
        <Grip $ml={6} />
        <Pair w={65} ml={4} a="指数" b="个股" />
        <Pair w={64} ml={9} a="全球" b="板块" />
        <Pair w={64} ml={10} a="股指" b="期货" />
        <Pair w={65} ml={10} a="期权" b="基金" />
        <Pair w={65} ml={10} a="港股" b="外汇" />
        <Pair w={65} ml={10} a="债券" b="美股" />
        <Grip $ml={11} />
        <Split w={56} ml={1} label="自定义" icon={<CustomIcon />} />
        <Split w={57} ml={10} label="多窗口" icon={<WindowsIcon />} />
      </ToolRow>
    </Toolbar>
  );
}

const SIDE_TABS = [
  ["首页", 74, "top"],
  ["应用", 75, "top", "icon"],
  ["分时图", 79],
  ["K线图", 79, "on"],
  ["个股资料", 101],
  ["自选报价", 101],
  ["综合排名", 102],
  ["牛叉诊股", 102],
  ["超级盘口", 102],
];

const MA_LEGEND = [
  ["MA5: 6.17", "#d8d8d8", true],
  ["MA10: 6.30", "#e0e040", true],
  ["MA20: 6.06", "#c474d4", false],
  ["MA30: 6.21", "#20c020", false],
  ["MA60: 6.99", "#30b4d0", false],
];
const SUB_LEGEND = [
  ["K: +67.39", "#d8d8d8", true],
  ["D: +61.27", "#e0e040", true],
  ["J: +46.53", "#1c7c3c", true],
  ["升J: +46.53", "#d81c1c", true],
  ["总金额亿: +1.64", "#e020e0", false],
  ["流入亿: +1.50", "#c01418", true],
  ["流出亿: -0.138", "#1cb81c", true],
  ["差额亿: +1.36", "#e4e4e4", true],
  ["活跃度: +77.80", "#20c8d8", true],
  ["SC: +50.95", "#c81818", true],
  ["短线出击: +0", "#e0e040"],
  ["急卖: +100.0", "#e0e040"],
  ["短卖: +1", "#1cb81c"],
];

const INDICATOR_TABS = [
  ["设置", 50, "flat", 3],
  ["指标平台", 83, "flat", 3],
  ["量比换手MACD", 147],
  ["柱型KDJ", 91],
  ["投机趋势", 91],
  ["抄底买入", 92],
  ["资金抄底", 98],
  ["主力资金活跃度", 153, "on"],
];

const SELL = ["5", "4", "3", "2", "1"];
const BUY = [["1", "6.57", "108886"], ["2", "6.56", "2219"], ["3", "6.55", "201"], ["4", "6.54", "180"], ["5", "6.53", "170"]];
const STATS = [
  ["最新", ["6.57", RED], "开盘", ["5.98", RED]],
  ["涨跌", ["+0.60", RED], "最高", ["6.57", RED]],
  ["涨幅", ["+10.05%", RED], "最低", ["5.92", GREEN]],
  ["振幅", ["10.89%", CYAN], "量比", ["0.55", GREEN]],
  ["总手", ["25.58", CYAN, "万"], "换手", ["2.34%", CYAN]],
  ["金额", ["1.64", CYAN, "亿"], "换手(实)", ["3.63%", CYAN]],
  ["市盈(静)", ["83.85", GREY], "市盈(动)", ["94.84", GREY]],
  ["总市值", ["71.83", CYAN, "亿"], "流通值", ["71.81", CYAN, "亿"]],
  ["涨停", ["6.57", RED], "跌停", ["5.37", GREEN]],
  ["外盘", ["10.18", RED, "万"], "内盘", ["15.40", GREEN, "万"]],
];
const TRADES = [
  ["14:55", "7", "1"], ["14:55", "7", "2"], ["14:56", "17", "1"], ["14:56", "11", "2"], ["14:56", "31", "2"], ["14:56", "10", "6"],
  ["14:56", "6", "3"], ["14:56", "38", "1"], ["14:56", "37", "1"], ["14:56", "10", "1"], ["14:56", "2", "1"], ["14:56", "8", "1"],
  ["14:56", "18", "1"], ["14:56", "74", "2"], ["14:56", "42", "1"], ["14:56", "30", "10"], ["14:57", "10", "1"], ["15:00", "321", "18"],
];
const QUOTE_TABS = ["细", "诊", "分", "筹", "焰", "指", "财"];

const StatValue = ({ v }) => (
  <Num $c={v[1]}>{v[0]}{v[2] && <NumUnit>{v[2]}</NumUnit>}</Num>
);

function QuotePanel() {
  return (
    <Panel>
      <PanelHead>
        <RMark>R</RMark>
        <StockName>博瑞传播 600880</StockName>
        <GearWrap><FaCog size={24} /></GearWrap>
      </PanelHead>
      <PanelBody>
        <RatioRow>
          <CellSplit><Cjk>委比</Cjk><Num $c={RED}>+100.00%</Num></CellSplit>
          <Num $c={RED}>111656</Num>
        </RatioRow>
        <Book $h={149}>
          <BookSide><span>卖</span><span>盘</span></BookSide>
          <BookRows>
            {SELL.map((n) => (
              <BookRow key={n}>
                <CellSplit><Num>{n}</Num><Num>–</Num></CellSplit>
                <Num $c={CYAN}>0</Num>
              </BookRow>
            ))}
          </BookRows>
        </Book>
        <Book $h={148}>
          <BookSide><span>买</span><span>盘</span></BookSide>
          <BookRows>
            {BUY.map(([n, p, v]) => (
              <BookRow key={n}>
                <CellSplit><Num>{n}</Num><Num $c={RED}>{p}</Num></CellSplit>
                <Num $c={CYAN}>{v}</Num>
              </BookRow>
            ))}
          </BookRows>
        </Book>
        <NoticeRow>
          在买盘<NoticeNum>6.49</NoticeNum>位置有
          <NoticeRed $ml={24}>1142手</NoticeRed>
          <NoticeBuy>买单!</NoticeBuy>
          <NoticeEnd>查看详细</NoticeEnd>
        </NoticeRow>
        <Stats>
          {STATS.map(([a, av, b, bv]) => (
            <StatRow key={a}>
              <CellSplit><Cjk>{a}</Cjk><StatValue v={av} /></CellSplit>
              <CellSplit><Cjk>{b}</Cjk><StatValue v={bv} /></CellSplit>
            </StatRow>
          ))}
        </Stats>
        <SectorRow>
          <SectorLeft><span>教育</span><SectorPct>1.10%</SectorPct></SectorLeft>
          <SectorLink>同行业比较</SectorLink>
        </SectorRow>
        <Trades>
          {TRADES.map(([t, vol, n], i) => (
            <TradeRow key={i}>
              <CellSplit><Num $c="#c8c8c8">{t}</Num><Num $c={RED}>6.57</Num></CellSplit>
              <Num $c={i === 17 ? RED : "#22d022"}>{vol}</Num>
              <ArrowCell><BlockArrow up={i === 17} /></ArrowCell>
              <Num $c={CYAN}>{n}</Num>
            </TradeRow>
          ))}
        </Trades>
        <TabRow>
          {QUOTE_TABS.map((t, i) => (
            <QuoteTab key={t} $w={i === 0 ? 44 : 40} $on={i === 0}>{t}</QuoteTab>
          ))}
        </TabRow>
      </PanelBody>
    </Panel>
  );
}

export default function App() {
  return (
    <Page>
      <Global />
      <TitleBar>
        <Menu>
          <span>系统</span><span>报价</span><span>分析</span><span>扩展行情</span>
          <MenuSerif>LEVEL-2</MenuSerif>
          <span>云决策</span><span>委托</span><span>智能</span><span>工具</span><span>资讯</span><span>帮助</span>
        </Menu>
        <Brand><BrandMark>同花顺</BrandMark> - A股技术分析</Brand>
        <TitleRight>
          <Alert $ml={0}>该股发出低信号</Alert>
          <Alert $ml={23}>注册</Alert>
          <Alert $ml={15}>登录</Alert>
          <Shade $ml={35}><FaBell size={22} /></Shade>
          <Shade $ml={15}><FaTshirt size={24} /></Shade>
          <SkinButton $ml={23} $blue>资讯</SkinButton>
          <SkinButton $ml={4}>委托 <DropTri /></SkinButton>
          <WinButton $w={43} $ml={11}>—</WinButton>
          <WinButton $w={43}>❐</WinButton>
          <WinButton $w={59}>✕</WinButton>
        </TitleRight>
      </TitleBar>
      <Tools />
      <Body>
        <Sidebar>
          {SIDE_TABS.map(([name, h, state, icon]) => (
            <SideTab key={name} $h={h} $on={state === "on"} $top={state === "top"}>
              {icon && <PlayEnd size={14} color="#222" />}
              <SideText $on={state === "on"} $ls={name.length === 4 ? 2 : name.length === 3 ? 1 : 0.5}>{name}</SideText>
            </SideTab>
          ))}
        </Sidebar>
        <ChartColumn>
          <Pane $h={777}>
            <Legend $h={30} $gap={7}>
              <LegendItem $c="#b8b8b8">日线(复权)</LegendItem>
              <LegendItem $c="#eee" $ml={5}>博瑞传播</LegendItem>
              {MA_LEGEND.map(([t, c, up]) => (
                <LegendItem key={t} $c={c}>{t}<Arrow $up={up}>{up ? "↑" : "↓"}</Arrow></LegendItem>
              ))}
            </Legend>
            <Buttons $h={30}>
              <BarButton $w={63} $first>加自选</BarButton>
              <BarButton $w={47}>均线</BarButton>
              <BarButton $w={46}>复权</BarButton>
              <BarButton $w={29}>叠</BarButton>
              <BarButton $w={29}>窗</BarButton>
              <BarButton $w={46}>预测</BarButton>
              <BarButton $w={29}><PlayEnd /></BarButton>
              <BarButton $w={22}><DropTri /></BarButton>
            </Buttons>
            <MainPlot />
            <Watermark>股海网提供 Www.Guhai.Com.CN</Watermark>
          </Pane>
          <Pane $h={406}>
            <Legend $h={29} $gap={9}>
              <LegendItem $c="#eee">主力资金活跃度</LegendItem>
              {SUB_LEGEND.map(([t, c, up]) => (
                <LegendItem key={t} $c={c}>
                  {t}
                  {up !== undefined && <Arrow $up={up}>{up ? "↑" : "↓"}</Arrow>}
                </LegendItem>
              ))}
            </Legend>
            <Buttons $h={29}>
              <BarButton $w={98} $first>指标说明</BarButton>
            </Buttons>
            <SubPlot />
          </Pane>
          <DateAxis />
          <TabRow>
            {INDICATOR_TABS.map(([t, w, state, mr]) => (
              <IndicatorTab key={t} $w={w} $flat={state === "flat"} $on={state === "on"} $mr={mr}>{t}</IndicatorTab>
            ))}
          </TabRow>
        </ChartColumn>
        <QuotePanel />
      </Body>
      <IndexRow>
        <IndexCell $pl={3}>
          <IndexName $w={27}>沪</IndexName>
          {[0, 1, 2, 3].map((k) => <IndexDash key={k} $w={132}>–</IndexDash>)}
        </IndexCell>
        <IndexCell $pl={9} $line>
          <IndexName $w={21}>深</IndexName>
          {[0, 1, 2, 3].map((k) => <IndexDash key={k} $w={131}>–</IndexDash>)}
        </IndexCell>
        <IndexCell $pl={9} $line>
          <IndexName $w={20}>创</IndexName>
          {[0, 1, 2, 3].map((k) => <IndexDash key={k} $w={131}>–</IndexDash>)}
        </IndexCell>
        <IndexCell $pl={7} $line>
          <IndexName $w={84}>中小板指</IndexName>
          {[0, 1].map((k) => <IndexDash key={k} $w={100}>–</IndexDash>)}
        </IndexCell>
      </IndexRow>
      <StatusBar>
        <StatusItem $w={45}>留言</StatusItem>
        <StatusItem $w={50}>解盘</StatusItem>
        <StatusItem $w={84}>股市日记</StatusItem>
        <StatusItem $w={67}>股灵通</StatusItem>
        <StatusItem $w={47}>行情</StatusItem>
        <StatusItem $w={82} $fs={15}>7*24小时</StatusItem>
        <StatusItem $w={85}>智能助手</StatusItem>
        <News>13:54 俄刑法修正案4日将提交至国家杜马 涉及对不友好国家制裁行为的惩罚</News>
        <SearchBox>代码/名称/简拼/功能</SearchBox>
      </StatusBar>
      <DesktopStrip><DesktopChunk /></DesktopStrip>
      <SiteBadge>
        <SiteTop>
          <SiteName>股海网</SiteName>
          <SiteSlogan>股票软件资源分享</SiteSlogan>
        </SiteTop>
        <SiteUrl>Www.Guhai.com.cn</SiteUrl>
      </SiteBadge>
    </Page>
  );
}
